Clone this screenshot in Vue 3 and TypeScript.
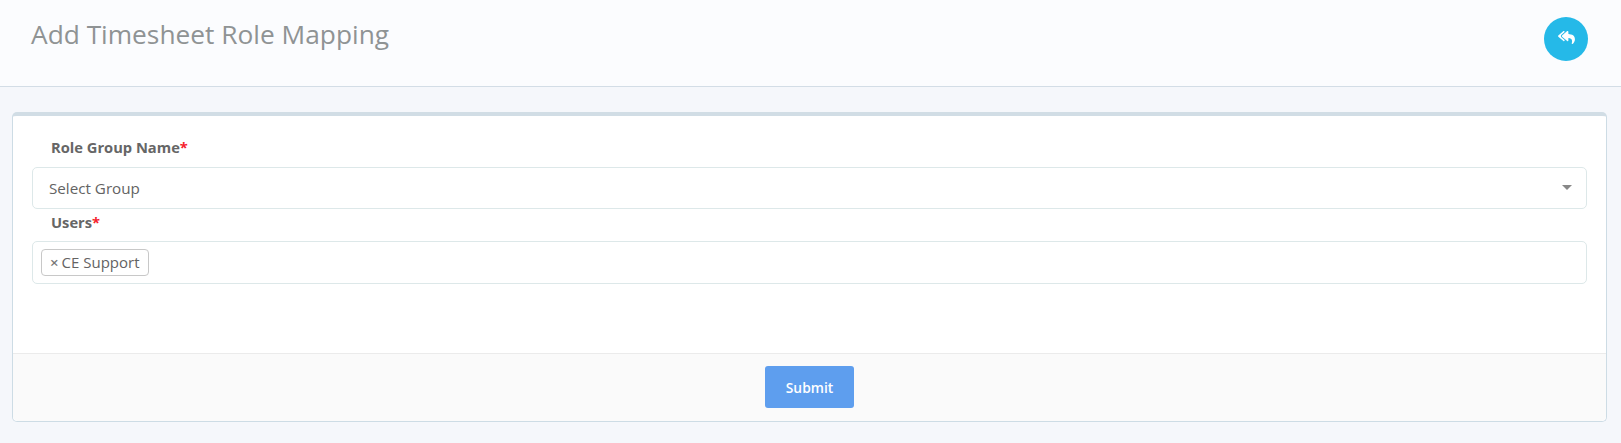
<script setup lang="ts">
import { ref } from "vue";

const users = ref<string[]>(["CE Support"]);
</script>

<template>
  <div class="page">
    <header class="page-head">
      <h1 class="page-head__title">Add Timesheet Role Mapping</h1>
      <button type="button" class="back-btn" aria-label="Back">
        <svg viewBox="0 0 576 512" width="17" height="15" fill="currentColor" aria-hidden="true">
          <path d="M136.309 189.836L312.313 37.851C327.72 24.546 352 35.348 352 56.015v82.763c129.182 10.231 224 52.212 224 183.548 0 61.441-39.582 122.309-83.333 154.132-13.653 9.931-33.111-2.533-28.077-18.631 38.512-123.162-3.922-169.482-112.59-182.015v84.175c0 20.701-24.3 31.453-39.687 18.164L136.309 226.164c-11.071-9.561-11.086-26.753 0-36.328zm-128 36.328L184.313 378.15C199.7 391.439 224 380.687 224 359.986v-15.818l-108.606-93.785A55.96 55.96 0 0 1 96 207.998a55.953 55.953 0 0 1 19.393-42.38L224 71.832V56.015c0-20.667-24.28-31.469-39.687-18.164L8.309 189.836c-11.086 9.575-11.071 26.767 0 36.328z" />
        </svg>
      </button>
    </header>

    <main class="content">
      <section class="card">
        <form class="card__body" @submit.prevent>
          <label class="field-label">Role Group Name<span class="req">*</span></label>
          <div class="select">
            <span>Select Group</span>
            <i class="select__arrow"></i>
          </div>

          <label class="field-label field-label--users">Users<span class="req">*</span></label>
          <div class="select select--multi">
            <span v-for="user in users" :key="user" class="tag">
              <span class="tag__remove">×</span>{{ user }}
            </span>
          </div>
        </form>

        <footer class="card__foot">
          <button type="button" class="submit">Submit</button>
        </footer>
      </section>
    </main>
  </div>
</template>

<style>
html,
body {
  background: #f5f7fb;
}
</style>

<style scoped>
.page {
  height: 443px;
  box-sizing: border-box;
  background: #f5f7fb;
  font-family: "Open Sans", "Noto Sans", sans-serif;
  color: #636363;
  overflow: hidden;
}

.page-head {
  height: 87px;
  box-sizing: border-box;
  display: flex;
  justify-content: space-between;
  align-items: flex-start;
  padding: 17px 33px 0 31px;
  background: #fbfcfe;
  border-bottom: 1px solid #d3dde6;
}

.page-head__title {
  margin: 0;
  font-size: 26.3px;
  line-height: 35px;
  font-weight: 400;
  color: #8f9394;
}

.back-btn {
  width: 44px;
  height: 44px;
  padding: 0 0 3px;
  border: 0;
  border-radius: 50%;
  background: #25b9e8;
  color: #fff;
  display: grid;
  place-items: center;
  cursor: pointer;
}

.content {
  padding: 25px 14px 0 12px;
}

.card {
  height: 310px;
  box-sizing: border-box;
  display: flex;
  flex-direction: column;
  background: #fff;
  border: 1px solid #cddce5;
  border-top: 4px solid #d1dde5;
  border-radius: 5px;
}

.card__body {
  flex: 1;
  padding: 19px 19px 0 19px;
}

.field-label {
  display: block;
  padding-left: 19px;
  height: 32px;
  font-size: 14.7px;
  line-height: 25px;
  font-weight: 700;
  color: #666;
}

.field-label--users {
  line-height: 27px;
}

.req {
  color: #f5222d;
}

.select {
  position: relative;
  height: 42px;
  box-sizing: border-box;
  display: flex;
  align-items: center;
  padding: 0 16px;
  border: 1px solid #dde8e9;
  border-radius: 5px;
  background: #fff;
  font-size: 15.2px;
}

.select--multi {
  height: 43px;
  padding: 0 8px;
}

.select__arrow {
  position: absolute;
  right: 14px;
  top: 17px;
  width: 0;
  height: 0;
  border-left: 5px solid transparent;
  border-right: 5px solid transparent;
  border-top: 5px solid #888;
}

.tag {
  height: 27px;
  box-sizing: border-box;
  display: inline-flex;
  align-items: center;
  padding: 0 8px;
  border: 1px solid #c8c8c8;
  border-radius: 4px;
  font-size: 15px;
  line-height: 1;
}

.tag__remove {
  margin-right: 3px;
  color: #777;
  font-weight: 600;
}

.card__foot {
  height: 68px;
  box-sizing: border-box;
  display: flex;
  justify-content: center;
  padding-top: 12px;
  background: #fafafa;
  border-top: 1px solid #ebebeb;
  border-radius: 0 0 5px 5px;
}

.submit {
  width: 89px;
  height: 42px;
  border: 0;
  border-radius: 3px;
  background: #5e9eee;
  color: #fff;
  font-family: inherit;
  font-size: 13.8px;
  font-weight: 600;
  cursor: pointer;
}
</style>
